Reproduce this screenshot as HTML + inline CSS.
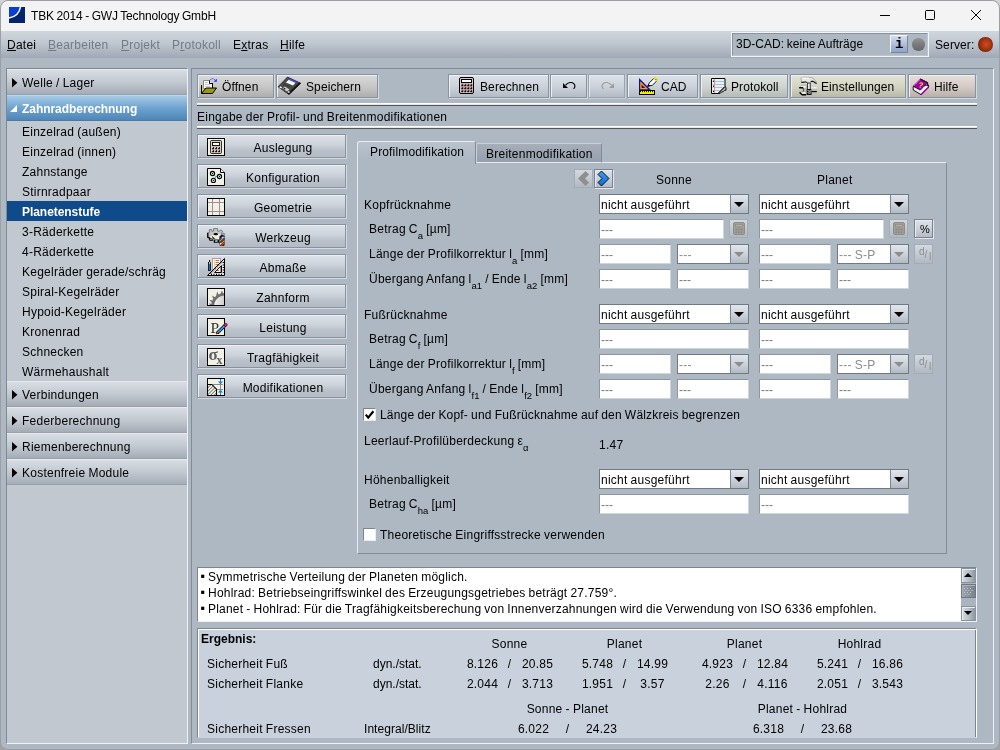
<!DOCTYPE html>
<html lang="de">
<head>
<meta charset="utf-8">
<title>TBK 2014 - GWJ Technology GmbH</title>
<style>
*{box-sizing:border-box;margin:0;padding:0}
html,body{width:1000px;height:750px;overflow:hidden;background:linear-gradient(#d2d2d2,#a2a2a2)}
body{font-family:"Liberation Sans",sans-serif;font-size:12px;color:#000;position:relative;letter-spacing:.24px;word-spacing:-.5px}
#win{position:absolute;left:0;top:0;width:1000px;height:750px;border-radius:8px;background:#adb8c3;overflow:hidden;border:1px solid #9b9fa5}
#w{position:absolute;left:-1px;top:-1px;width:1000px;height:750px;will-change:transform}
#w *{position:absolute;white-space:nowrap}
#w u,#w sub,#w .st{position:static}
#title{left:0;top:0;width:1000px;height:31px;background:#f3f3f3}
#title .t{left:31px;top:9px;font-size:12px;line-height:15px;color:#000;letter-spacing:-.17px}
#menubar{left:0;top:31px;width:1000px;height:27px;background:linear-gradient(#d0d6dd,#bfc7d0 45%,#9fa9b5)}
.mi{top:7px;line-height:15px}
.mi.dis{color:#727b86}
/* sidebar */
#side{left:6px;top:68px;width:182px;height:676px;background:#c1c8d0;border-right:1px solid #eef1f4;border-left:1px solid #7f8893;border-top:1px solid #7f8893;border-bottom:1px solid #f0f3f6}
.sh{left:0;width:180px;height:26px;background:linear-gradient(#d8dde3,#c3c9d1 50%,#a4acb6);border-top:1px solid #e6eaef;border-bottom:1px solid #98a0aa}
.sh span{left:15px;top:6px;line-height:15px}
.sh svg{left:5px;top:8px}
.sh.act{background:linear-gradient(#a6cbe6,#6ea3cf 50%,#4f86b8);border-top:1px solid #b6d6ee;border-bottom:1px solid #4a7aa8}
.sh.act span{color:#fff;font-weight:bold;letter-spacing:-.05px}
.si{left:15px;line-height:15px}
/* main */
#main{left:191px;top:68px;width:803px;height:676px;border:1px solid;border-color:#838c96 #eef1f4 #eef1f4 #838c96}
.tb{top:74px;height:24px;border:1px solid #8a939d;box-shadow:inset 1px 1px 0 #eceff3,1px 1px 0 #d3d9df;background:linear-gradient(#dde2e9,#cbd1d9 55%,#b3bbc5)}
.tb span{top:5px;line-height:15px;letter-spacing:.1px}
.tb.g{background:linear-gradient(#d9d9d9,#c6c6c6 55%,#adadad)}
.sep{left:197px;width:780px;height:3px;background:linear-gradient(#fff 0,#fff 1px,#e6e6e6 1px,#e6e6e6 2px,#555 2px)}
.nb{left:197px;width:149px;height:24px;border:1px solid #8a939d;box-shadow:inset 1px 1px 0 #eceff3,1px 1px 0 #d3d9df;background:linear-gradient(#dde2e9,#cdd3db 45%,#bac1ca 70%,#b3bbc5)}
.nb span{left:23px;width:124px;text-align:center;top:6px;line-height:15px}
.nb svg{left:9px;top:3px}
/* form */
.lbl{line-height:15px}
.lbl sub{font-size:9.5px;vertical-align:-6px;line-height:0;letter-spacing:0}
.tf{height:20px;background:#fff;border:1px solid;border-color:#8d96a0 #cfd5dc #cfd5dc #8d96a0}
.tf span{left:1px;top:3px;line-height:15px;color:#787878;letter-spacing:0}
.cb{height:20px;background:#fff;border:1px solid #6f7883}
.cb span{left:1px;top:3px;line-height:15px}
.cb b{right:0;top:0;width:18px;height:18px;border-left:1px solid #7d8690;background:linear-gradient(#e2e6eb,#cdd3da 50%,#b2bac4)}
.cb b:after{content:"";position:absolute;left:3px;top:7px;border-left:5px solid transparent;border-right:5px solid transparent;border-top:5px solid #000}
.cb.dis span{color:#8c8c8c}
.cb.dis b:after{border-top-color:#8e8e8e}
.chk{width:13px;height:13px;background:#fff;border:1px solid;border-color:#7d858f #e8ecf0 #e8ecf0 #7d858f}
.sb{border:1px solid #7a838d;box-shadow:inset 1px 1px 0 #e8ecf0,1px 1px 0 #e4e8ec;background:linear-gradient(#dde2e9,#cdd3db 50%,#b3bbc5)}
.sb.dis{border-color:#a3abb5;box-shadow:none;background:linear-gradient(#d3d9e0,#c3cad2 50%,#b0b8c2)}
.r{line-height:15px}
</style>
</head>
<body>
<div id="win"><div id="w">
<div id="title">
<svg style="left:9px;top:7px" width="16" height="16" viewBox="0 0 16 16"><rect width="16" height="16" fill="#04246b"/><path d="M0 0H11.5C10.5 6 6.5 10 0 11Z" fill="#0a3fd0"/><path d="M11.5 0C10.5 6 6.5 10 0 11" fill="none" stroke="#fff" stroke-width="1.5"/></svg>
<span class="t">TBK 2014 - GWJ Technology GmbH</span>
<svg style="left:875px;top:5px" width="20" height="20"><path d="M5 10.5H15" stroke="#000" stroke-width="1" fill="none"/></svg>
<svg style="left:920px;top:5px" width="20" height="20"><rect x="5.5" y="5.5" width="9" height="9" rx="1" stroke="#000" stroke-width="1" fill="none"/></svg>
<svg style="left:966px;top:5px" width="20" height="20"><path d="M5 5L15 15M15 5L5 15" stroke="#000" stroke-width="1" fill="none"/></svg>
</div>
<div id="menubar">
<span class="mi" style="left:7px"><u>D</u>atei</span>
<span class="mi dis" style="left:48px"><u>B</u>earbeiten</span>
<span class="mi dis" style="left:121px"><u>P</u>rojekt</span>
<span class="mi dis" style="left:172px">P<u>r</u>otokoll</span>
<span class="mi" style="left:233px">E<u>x</u>tras</span>
<span class="mi" style="left:280px"><u>H</u>ilfe</span>
</div>
<div style="left:731px;top:32px;width:198px;height:25px;border:1px solid #f2f4f6;background:#adb8c3"><div style="left:0;top:0;width:196px;height:23px;border:1px solid;border-color:#8a939d #bcc4cd #bcc4cd #8a939d"></div>
<span style="left:4px;top:4px;line-height:15px;letter-spacing:0">3D-CAD: keine Aufträge</span>
<div style="left:158px;top:2px;width:18px;height:18px;border:1px solid;border-color:#f4f6f9 #7d858f #7d858f #f4f6f9;background:linear-gradient(#d4def0,#a9b9d8 60%,#8fa3cb)"><span style="left:4px;top:1px;font:bold 14px/15px 'Liberation Mono',monospace;letter-spacing:0">i</span></div>
<div style="left:180px;top:5px;width:12.5px;height:12.5px;border-radius:50%;background:linear-gradient(#939393,#787878 55%,#666)"></div>
</div>
<span style="left:935px;top:38px;line-height:15px;letter-spacing:.1px">Server:</span>
<div style="left:978px;top:37px;width:14.5px;height:14.5px;border-radius:50%;background:radial-gradient(circle at 55% 48%,#d24a1a,#b03a14 35%,#8c2c0e 60%,#6a2008 72%)"></div>
<div id="side">
<div class="sh" style="top:0"><svg width="6" height="10"><path d="M0 0L5.4 4.75L0 9.5Z" fill="#000"/></svg><span>Welle / Lager</span></div>
<div class="sh act" style="top:26px"><svg style="left:3px;top:9px" width="7" height="7"><path d="M0 7H7V0Z" fill="#fff"/></svg><span>Zahnradberechnung</span></div>
<span class="si" style="top:56px">Einzelrad (außen)</span>
<span class="si" style="top:76px">Einzelrad (innen)</span>
<span class="si" style="top:96px">Zahnstange</span>
<span class="si" style="top:116px">Stirnradpaar</span>
<div style="left:0;top:132px;width:180px;height:20px;background:#0f4a8a"><span style="left:15px;top:4px;line-height:15px;color:#fff;font-weight:bold;letter-spacing:-.05px">Planetenstufe</span></div>
<span class="si" style="top:156px">3-Räderkette</span>
<span class="si" style="top:176px">4-Räderkette</span>
<span class="si" style="top:196px">Kegelräder gerade/schräg</span>
<span class="si" style="top:216px">Spiral-Kegelräder</span>
<span class="si" style="top:236px">Hypoid-Kegelräder</span>
<span class="si" style="top:256px">Kronenrad</span>
<span class="si" style="top:276px">Schnecken</span>
<span class="si" style="top:296px">Wärmehaushalt</span>
<div class="sh" style="top:312px"><svg width="6" height="10"><path d="M0 0L5.4 4.75L0 9.5Z" fill="#000"/></svg><span>Verbindungen</span></div>
<div class="sh" style="top:338px"><svg width="6" height="10"><path d="M0 0L5.4 4.75L0 9.5Z" fill="#000"/></svg><span>Federberechnung</span></div>
<div class="sh" style="top:364px"><svg width="6" height="10"><path d="M0 0L5.4 4.75L0 9.5Z" fill="#000"/></svg><span>Riemenberechnung</span></div>
<div class="sh" style="top:390px"><svg width="6" height="10"><path d="M0 0L5.4 4.75L0 9.5Z" fill="#000"/></svg><span>Kostenfreie Module</span></div>
</div>
<div id="main"></div>
<div class="tb g" style="left:197px;width:77px"><span style="left:24px">Öffnen</span></div>
<div class="tb g" style="left:276px;width:102px"><span style="left:29px">Speichern</span></div>
<div class="tb" style="left:448px;width:101px"><span style="left:31px">Berechnen</span></div>
<div class="tb" style="left:550px;width:37px"></div>
<div class="tb" style="left:588px;width:37px;border-color:#9aa3ad;box-shadow:inset 1px 1px 0 #e4e8ed,1px 1px 0 #c9d0d8"></div>
<div class="tb" style="left:627px;width:71px"><span style="left:33px">CAD</span></div>
<div class="tb" style="left:700px;width:88px;background:linear-gradient(#dfe4e0,#cdd3ce 55%,#b4bcb6)"><span style="left:30px">Protokoll</span></div>
<div class="tb" style="left:790px;width:116px;background:linear-gradient(#e4e4d6,#d3d3c3 55%,#b9b9a8)"><span style="left:30px">Einstellungen</span></div>
<div class="tb" style="left:908px;width:68px;background:linear-gradient(#e6dfda,#d4cac5 55%,#bab0ab)"><span style="left:25px">Hilfe</span></div>
<svg width="16" height="16" viewBox="0 0 16 16" style="left:201px;top:78px"><path d="M2.5 2.5H8.5L11.5 5.5V10.5H2.5Z" fill="#fff" stroke="#8a8a8a"/>
<path d="M8.5 2.5V5.5H11.5" fill="#fff" stroke="#000"/><path d="M11.5 5V10" stroke="#000"/>
<path d="M4 4.5H7M4 6.5H9M4 8.5H9" stroke="#c4c4c4"/>
<path d="M0.5 7V15" stroke="#000"/><path d="M1.5 7.5V14.5" stroke="#d8d040"/>
<path d="M5 10H15.5L11.5 15.5H0.5Z" fill="#9a9a12" stroke="#000"/>
<path d="M9.3 2Q11.5 -0.8 14 2" fill="none" stroke="#2828f0" stroke-width="1" stroke-dasharray="1.3 1"/>
<path d="M15.8 0.8V3.8H12.6Z" fill="#2020ff"/></svg><svg width="26" height="20" viewBox="0 0 26 20" style="left:277px;top:76px"><path d="M10.5 1L23.8 7.3L12 18.6L1 10.8Z" fill="#4a4a4a" stroke="#2a2a2a" stroke-width=".8"/>
<path d="M23.8 7.3L12 18.6L10.6 17.6L22.4 6.6Z" fill="#111"/>
<path d="M12 3.4L19 6.3L16 9.5L8.9 6.6Z" fill="#fff"/>
<path d="M12.2 2.6L19.6 6L18.6 7L11.3 3.7Z" fill="#4646ff"/>
<path d="M2.3 11.2L3.6 10.2L5.2 11.4L3.9 12.4Z" fill="#f2f2f2"/>
<path d="M5.4 12.6L8 10.6L12.4 13.4L10 15.6Z" fill="#cfcfcf"/>
<path d="M6.2 12.8L7.4 11.8L8.8 12.7L7.6 13.7Z" fill="#222"/>
<path d="M10.6 16L11.8 15L13 15.9L11.9 16.9Z" fill="#f2f2f2"/>
<path d="M7 7.6L13 10.4M6 8.6L12 11.4" stroke="#222" stroke-width=".7" stroke-dasharray="1 1"/></svg><svg width="15" height="17" viewBox="0 0 15 17" style="left:459px;top:77px"><rect x="0.5" y="0.5" width="14" height="16" rx="1.5" fill="#cfa9ad" stroke="#000"/><rect x="1.5" y="1.5" width="12" height="14" rx="1" fill="none" stroke="#e6cfd1" stroke-width=".8"/><rect x="2.5" y="2.5" width="10" height="3" fill="#fff" stroke="#000"/><rect x="2.2" y="7.2" width="2" height="2" fill="#000"/><rect x="2.2" y="7.2" width="1" height="1" fill="#e8d4d6"/><rect x="5.2" y="7.2" width="2" height="2" fill="#000"/><rect x="5.2" y="7.2" width="1" height="1" fill="#e8d4d6"/><rect x="8.2" y="7.2" width="2" height="2" fill="#000"/><rect x="8.2" y="7.2" width="1" height="1" fill="#e8d4d6"/><rect x="11.2" y="7.2" width="2" height="2" fill="#000"/><rect x="11.2" y="7.2" width="1" height="1" fill="#e8d4d6"/><rect x="2.2" y="10.2" width="2" height="2" fill="#000"/><rect x="2.2" y="10.2" width="1" height="1" fill="#e8d4d6"/><rect x="5.2" y="10.2" width="2" height="2" fill="#000"/><rect x="5.2" y="10.2" width="1" height="1" fill="#e8d4d6"/><rect x="8.2" y="10.2" width="2" height="2" fill="#000"/><rect x="8.2" y="10.2" width="1" height="1" fill="#e8d4d6"/><rect x="11.2" y="10.2" width="2" height="2" fill="#000"/><rect x="11.2" y="10.2" width="1" height="1" fill="#e8d4d6"/><rect x="2.2" y="13.2" width="2" height="2" fill="#000"/><rect x="2.2" y="13.2" width="1" height="1" fill="#e8d4d6"/><rect x="5.2" y="13.2" width="2" height="2" fill="#000"/><rect x="5.2" y="13.2" width="1" height="1" fill="#e8d4d6"/><rect x="8.2" y="13.2" width="2" height="2" fill="#000"/><rect x="8.2" y="13.2" width="1" height="1" fill="#e8d4d6"/><rect x="11.2" y="13.2" width="2" height="2" fill="#000"/><rect x="11.2" y="13.2" width="1" height="1" fill="#e8d4d6"/></svg><svg width="15" height="9" viewBox="0 0 15 9" style="left:562px;top:81px"><g><path d="M1 2V7H6Z" fill="#000"/><path d="M3.6 4.2C6 1 10 .8 12 2.8C13.6 4.6 13 6.6 11.6 7.8" fill="none" stroke="#000" stroke-width="1.15"/></g></svg><svg width="15" height="9" viewBox="0 0 15 9" style="left:600px;top:81px"><g transform="translate(15,0) scale(-1,1)"><path d="M1 2V7H6Z" fill="#9c9c9c"/><path d="M3.6 4.2C6 1 10 .8 12 2.8C13.6 4.6 13 6.6 11.6 7.8" fill="none" stroke="#9c9c9c" stroke-width="1.15"/></g></svg><svg width="20" height="19" viewBox="0 0 20 19" style="left:639px;top:76px"><path d="M0.5 3.5V14H11Z" fill="#ff9a10" stroke="#10108c" stroke-width="1.4"/>
<path d="M2.6 8.4V12H6.2Z" fill="#10108c"/>
<rect x="0.5" y="14.5" width="15" height="4" fill="#f4f000" stroke="#000"/>
<path d="M1 15.6H15" stroke="#000" stroke-dasharray="1 1"/>
<path d="M8.6 10.4L10.4 6.8L15.2 2L18 4.6L13.4 9.2Z" fill="#fff" stroke="#000" stroke-width=".9"/>
<path d="M8.4 10.6L9.6 8.2L11.6 10Z" fill="#000"/>
<path d="M14.6 2.6L16.2 1L19 3.6L17.4 5.2Z" fill="#f4f000" stroke="#d8d000" stroke-width=".5"/>
<path d="M16.4 4L17.4 3" stroke="#3030c0" stroke-width=".9"/></svg><svg width="16" height="16" viewBox="0 0 16 16" style="left:711px;top:78px"><path d="M0.5 0.5H14V8.4L7 15.5H0.5Z" fill="#f3eded" stroke="#000"/>
<path d="M4 3.5H13M4 6.5H13M4 9.5H11.5M4 12.5H8.5" stroke="#8cc8f2"/>
<path d="M1 3.5H3M1 6.5H3M1 9.5H3M1 12.5H3" stroke="#b8dcf4"/>
<path d="M3.5 1V15" stroke="#ff8484"/>
<rect x="2" y="2.6" width="1" height="1.2" fill="#000"/><rect x="2" y="7.6" width="1" height="1.2" fill="#000"/><rect x="2" y="12.8" width="1" height="1.2" fill="#000"/>
<path d="M14 8.6L15 9.4V12.2L13.4 12.4L12 13.8L10.4 14L9.2 15.4L7.2 15.5Z" fill="#b4b4b4" stroke="#000" stroke-width=".9"/></svg><svg width="20" height="20" viewBox="0 0 20 20" style="left:798px;top:76px"><path d="M3 1.6L6 1.2L12 1.4C15 1.8 17.4 3.4 18.6 7.4L17 6.4C16 4.8 14.4 4.6 12.8 5.2L12.6 7.4H9.4L9 6C7.6 5 5 6.4 3.4 6.2Z" fill="#e6e6e6" stroke="#8a8a8a" stroke-width=".6"/>
<path d="M3.4 6.4C5 6.6 7.6 5.4 9 6.4M12.8 5.6C14.6 5 16 5.4 17 6.8L18.6 7.6" fill="none" stroke="#111" stroke-width="1.1"/>
<path d="M3.6 2L11 2.2" stroke="#fff" stroke-width="1"/>
<rect x="9.6" y="7" width="2.6" height="6.4" fill="#f4f4f4" stroke="#222" stroke-width=".9"/>
<rect x="8.6" y="13" width="5" height="6" fill="#111"/>
<path d="M9.6 14.5H12.6M9.6 16.5H12.6" stroke="#d8d8d8" stroke-dasharray="1 1"/>
<path d="M10.6 15.5H13M10.6 17.5H13" stroke="#d8d8d8" stroke-dasharray="1 1"/>
<path d="M13.4 11.4H18.8V15.8H13.4Z" fill="#b8b8b8"/><path d="M13.4 11.9H18.8" stroke="#fff" stroke-width="1.2"/><path d="M13.4 15.6H18.8" stroke="#000" stroke-width="1.2"/>
<path d="M1.4 11.6L3.2 9.4L8 9L8.6 12.4L6.4 12.6L6.6 15.6L8.4 16.4L7.8 18.6H4.2L1.6 16.2L5.4 15.8L5.2 11.8Z" fill="#ededed" stroke="#7a7a7a" stroke-width=".5"/>
<path d="M1.2 11.8H5.2M1.6 16.4L4.2 18.8H8" fill="none" stroke="#000" stroke-width="1.4"/><path d="M5.4 12V15.6" stroke="#333" stroke-width=".8"/></svg><svg width="18" height="18" viewBox="0 0 18 18" style="left:912px;top:78px"><path d="M1.2 8.4V12L9 16.6L16.6 9V7Z" fill="#f0f0f0" stroke="#000" stroke-width=".9"/>
<path d="M9 16.8L16.8 9" stroke="#a000a0" stroke-width="1.3"/>
<path d="M8.4 1L15.6 4.6L8.2 12L1.2 8.2Z" fill="#a000a8" stroke="#6a006e" stroke-width=".6"/>
<path d="M8.4 1L15.6 4.6L15.8 8.2" fill="none" stroke="#000" stroke-width="1"/>
<path d="M1.6 8.4L8.2 12.2L15.4 5" fill="none" stroke="#000" stroke-width=".8" stroke-dasharray="1.2 .8"/>
<path d="M2.4 7.4L8 1.8" stroke="#d8b8dc" stroke-width=".9" stroke-dasharray="1 1"/>
<text x="6.6" y="9.6" font-family="Liberation Sans,sans-serif" font-weight="bold" font-size="7.5" fill="#f4f000" transform="rotate(14 9 7)">?</text></svg>
<div class="sep" style="top:103px"></div>
<span class="lbl" style="left:197px;top:110px">Eingabe der Profil- und Breitenmodifikationen</span>
<div class="sep" style="top:126px"></div>
<div class="nb" style="top:134px"><svg width="18" height="18" viewBox="0 0 18 18" style=""><rect x="0.5" y="0.5" width="17" height="17" fill="#f1f1e6" stroke="#000"/><rect x="3.5" y="2.5" width="11" height="13" rx="1.2" fill="#cdbfb2" stroke="#1a1410"/><rect x="4.3" y="3.3" width="9.4" height="11.4" rx=".8" fill="none" stroke="#e8e0d8" stroke-width=".7"/><rect x="5.5" y="4.5" width="7" height="3" fill="#fff" stroke="#1a1410"/><rect x="5" y="9.2" width="2" height="2" fill="#000"/><rect x="5" y="9.2" width="1" height="1" fill="#efe6dd"/><rect x="8" y="9.2" width="2" height="2" fill="#000"/><rect x="8" y="9.2" width="1" height="1" fill="#efe6dd"/><rect x="11" y="9.2" width="2" height="2" fill="#000"/><rect x="11" y="9.2" width="1" height="1" fill="#efe6dd"/><rect x="5" y="12.2" width="2" height="2" fill="#000"/><rect x="5" y="12.2" width="1" height="1" fill="#efe6dd"/><rect x="8" y="12.2" width="2" height="2" fill="#000"/><rect x="8" y="12.2" width="1" height="1" fill="#efe6dd"/><rect x="11" y="12.2" width="2" height="2" fill="#000"/><rect x="11" y="12.2" width="1" height="1" fill="#efe6dd"/></svg><span>Auslegung</span></div>
<div class="nb" style="top:164px"><svg width="18" height="18" viewBox="0 0 18 18" style=""><path d="M0.5 0.5H13.5L17.5 4.5V17.5H0.5Z" fill="#f1f1e6" stroke="#000"/><path d="M13.5 0.5V4.5H17.5" fill="#fafaf2" stroke="#000"/><path d="M6.5 6.5L8.5 8.4M12 8.4H9.4M7 11.4L8.4 9.2" stroke="#000" stroke-width=".8" stroke-dasharray="1 .8"/><rect x="8" y="7.9" width="1.2" height="1.2" fill="#58b8e0"/><circle cx="5.5" cy="5.5" r="2.1" fill="#a8e4f4" stroke="#000" stroke-width="1.1"/><rect x="5.0" y="5.0" width="1" height="1" fill="#000"/><circle cx="12.5" cy="8.5" r="2.1" fill="#a8e4f4" stroke="#000" stroke-width="1.1"/><rect x="12.0" y="8.0" width="1" height="1" fill="#000"/><circle cx="6.4" cy="12.4" r="2.1" fill="#a8e4f4" stroke="#000" stroke-width="1.1"/><rect x="5.9" y="11.9" width="1" height="1" fill="#000"/></svg><span>Konfiguration</span></div>
<div class="nb" style="top:194px"><svg width="18" height="18" viewBox="0 0 18 18" style=""><rect x="0.5" y="0.5" width="17" height="17" fill="#f1f1e6" stroke="#000"/><path d="M5.5 1V17M12.5 1V17M1 4.5H17M1 13.5H17" stroke="#a88c94"/></svg><span>Geometrie</span></div>
<div class="nb" style="top:224px"><svg width="18" height="18" viewBox="0 0 18 18" style=""><path d="M2.4 1.6H4.6L5 3.4L6.6 3V0.6H10.6V3L12.2 3.6L13.6 1.8L15.6 3.2L14.6 5.2L16 7V10L12.6 11.2V14.6H6.6V11.6L4.8 12.4L2.4 11V9.4L0.6 9V4.6L2.4 4.4Z" fill="#c4c4c4" stroke="#5a5a5a" stroke-width=".7"/>
<path d="M3.2 8.6L5.6 7L10.8 5.2L15.2 7.4V10.4L11.4 11.6L7.4 10.2L5 10.8Z" fill="#f0ece0"/>
<path d="M0.8 5V9.4L2.6 10.2V11.4L4.6 12.4" fill="none" stroke="#000" stroke-width="1.3"/>
<ellipse cx="8.8" cy="6.2" rx="2.3" ry="1.1" fill="#000"/>
<path d="M6.4 9.6L7.6 10.6M5.4 8.4L6.6 10.8" stroke="#000" stroke-width=".9"/>
<rect x="7" y="11.6" width="5" height="3" fill="#0a0a0a"/><rect x="8.2" y="12.2" width="2.4" height="1.6" fill="#a8d8e8"/>
<rect x="2.6" y="10.4" width="3" height="2.6" fill="#0a0a0a"/><rect x="3.4" y="11" width="1.2" height="1.2" fill="#d8d8e8"/>
<path d="M12.4 8.6L14.6 6.6L17.6 7.8V17.2L16.4 18H13.4L12.4 17Z" fill="#111"/>
<path d="M12.6 11.4L16.6 7.6M12.6 15.4L17.4 10.6" stroke="#1848c8" stroke-width="1.3"/>
<path d="M12.6 13.4L17.2 8.8M12.8 17.2L17.4 12.6" stroke="#ff9a10" stroke-width="1.2"/>
<path d="M14.4 17.6L17.4 14.6" stroke="#ff4a10" stroke-width="1.2"/>
<path d="M12.8 16.2L14.2 14.8M15 10.2L16.2 9" stroke="#fff" stroke-width="1"/>
<path d="M14.6 6.4L17 5L17.6 7.6" fill="#a8c4d0" stroke="#444" stroke-width=".5"/></svg><span>Werkzeug</span></div>
<div class="nb" style="top:254px"><svg width="18" height="18" viewBox="0 0 18 18" style=""><rect x="5.5" y="0.5" width="8" height="14" fill="#fff" stroke="#c09494"/>
<path d="M7.5 1.5V14" stroke="#ffd860"/><path d="M8.5 2.5H12M8.5 4.5H12M8.5 6.5H12M8.5 8.5H12M8.5 10.5H12M8.5 12.5H12" stroke="#b06040" stroke-width=".9"/>
<path fill-rule="evenodd" d="M17.5 0.5V17.5H0.5ZM14.5 7.6V14.5H7.6Z" fill="#e4e4dc" stroke="#000"/>
<path d="M3.4 16L16 3.4" stroke="#000" stroke-width="1" stroke-dasharray="1 1.3"/>
<path d="M16.4 4V16M4 16.4H16" stroke="#000" stroke-width="1.2" stroke-dasharray="1 1.5"/>
<rect x="1.5" y="4.5" width="2" height="8" fill="#1474d8" stroke="#000" stroke-width=".8"/><rect x="2" y="4" width="1.2" height="1.8" fill="#ffd040"/><rect x="2.1" y="2" width="1" height="2" fill="#000"/></svg><span>Abmaße</span></div>
<div class="nb" style="top:284px"><svg width="18" height="18" viewBox="0 0 18 18" style=""><rect x="0.5" y="0.5" width="17" height="17" fill="#f1f1e6" stroke="#000"/><defs><linearGradient id="zg" x1="0" y1="0" x2="1" y2="0"><stop offset="0" stop-color="#f4f4f4"/><stop offset="1" stop-color="#cfcfcf"/></linearGradient></defs>
<path d="M17 6.6C11 7.4 7.2 11.4 6.6 17H17Z" fill="url(#zg)"/>
<path d="M17 5L16 5.2L15 2.4L13.4 5.8L11.6 6.6L10.2 3.6L9.2 7.8L7.8 9.2L5 7.6L6.2 11L5.4 12.6L2.4 11.8L4.6 14.6L4.4 16L1.8 15.2L3 17H7.2C7.8 11.8 11.2 8.2 17 7.4Z" fill="#6e6e6e"/></svg><span>Zahnform</span></div>
<div class="nb" style="top:314px"><svg width="22" height="18" viewBox="0 0 22 18" style=""><rect x="0.5" y="0.5" width="17" height="17" fill="#f1f1e6" stroke="#000"/><text x="3.6" y="14.6" font-family="Liberation Serif,serif" font-size="15.5" fill="#333">P</text><path d="M9.4 14.2L17.4 6.2L19.2 8L11.2 16Z" fill="#2484e4" stroke="#000" stroke-width="1"/>
<path d="M11.4 13.4L12.6 14.6M13 11.8L14.2 13M14.6 10.2L15.8 11.4M16.2 8.6L17.4 9.8" stroke="#9cd0ff" stroke-width=".6"/>
<path d="M9.2 15L10.6 13.4L12 14.8L9.6 16Z" fill="#ff8a10" stroke="#000" stroke-width=".5"/><path d="M9 16.2L9.8 15.2L10.4 15.8Z" fill="#000"/>
<circle cx="18.6" cy="6.8" r="1.5" fill="#c020c0" stroke="#7a0a1a" stroke-width=".9"/></svg><span>Leistung</span></div>
<div class="nb" style="top:344px"><svg width="18" height="18" viewBox="0 0 18 18" style=""><rect x="0.5" y="0.5" width="17" height="17" fill="#f1f1e6" stroke="#000"/><text x="1.4" y="12.4" font-family="Liberation Serif,serif" font-weight="bold" font-size="17" fill="#5e5e68">σ</text><text x="9.6" y="15.6" font-family="Liberation Serif,serif" font-weight="bold" font-size="12" fill="#5e5e68">x</text></svg><span>Tragfähigkeit</span></div>
<div class="nb" style="top:374px"><svg width="18" height="18" viewBox="0 0 18 18" style=""><rect x="0.5" y="0.5" width="17" height="17" fill="#f1f1e6" stroke="#000"/><defs><pattern id="hp" width="2.4" height="2.4" patternUnits="userSpaceOnUse" patternTransform="rotate(-45)"><rect width="2.4" height="2.4" fill="#f1f1e6"/><rect width="2.4" height=".75" fill="#666"/></pattern></defs>
<path d="M0.5 6.5H4.6C6 6.8 6.2 8 7.6 9.4C8.4 10.2 9.5 10.6 9.5 11.6V17.5H0.5Z" fill="url(#hp)" stroke="#000" stroke-width="1.1"/>
<path d="M6 6.5H16M10 11.5H16M13.5 6.5V11.5" stroke="#8a8a8a"/>
<path d="M13.5 1V5.4M13.5 12.6V17" stroke="#1484e4"/>
<path d="M10.9 3.4H16.1L13.5 6.2Z" fill="#1484e4"/><path d="M10.9 14.6H16.1L13.5 11.8Z" fill="#1484e4"/></svg><span>Modifikationen</span></div>
<div id="tabpane" style="left:357px;top:162px;width:590px;height:392px;border:1px solid;border-color:#e8ecf0 #838b95 #838b95 #e8ecf0"></div>
<div style="left:476px;top:143px;width:126px;height:20px;background:linear-gradient(#a5aeb9,#96a0ac);border:1px solid;border-color:#c9d0d8 #838b95 #e8ecf0 #c9d0d8;border-radius:2px 2px 0 0"><span style="left:9px;top:3px;line-height:15px">Breitenmodifikation</span></div>
<div style="left:357px;top:141px;width:119px;height:23px;background:linear-gradient(#bac3cd,#adb8c3 75%);border:1px solid;border-color:#e8ecf0 #838b95 transparent #e8ecf0;border-bottom:none;border-radius:3px 3px 0 0"><span style="left:12px;top:3px;line-height:15px;letter-spacing:.15px">Profilmodifikation</span></div>
<div class="sb dis" style="left:574px;top:169px;width:19px;height:19px"><svg width="17" height="17" style="left:0;top:0"><path d="M3 8.5L10.5 1L14 4.5L10 8.5L14 12.5L10.5 16Z" fill="#8f8f8f"/></svg></div>
<div class="sb" style="left:594px;top:169px;width:19px;height:19px"><svg width="17" height="17" style="left:0;top:0"><defs><linearGradient id="bl" x1="0" y1="0" x2="0" y2="1"><stop offset="0" stop-color="#3c9cf4"/><stop offset="1" stop-color="#0c6cd8"/></linearGradient></defs><path d="M14 8.5L6.5 1L3 4.5L7 8.5L3 12.5L6.5 16Z" fill="url(#bl)" stroke="#000" stroke-width=".9"/></svg></div>
<span class="lbl" style="left:656px;top:173px">Sonne</span>
<span class="lbl" style="left:817px;top:173px">Planet</span>
<span class="lbl" style="left:364px;top:198px">Kopfrücknahme</span>
<div class="cb" style="left:599px;top:194px;width:150px"><span>nicht ausgeführt</span><b></b></div>
<div class="cb" style="left:759px;top:194px;width:150px"><span>nicht ausgeführt</span><b></b></div>
<span class="lbl" style="left:369px;top:222px">Betrag C<sub>a</sub> [µm]</span>
<div class="tf" style="left:599px;top:219px;width:125px"><span>---</span></div>
<div class="tf" style="left:759px;top:219px;width:125px"><span>---</span></div>
<span class="lbl" style="left:369px;top:247px">Länge der Profilkorrektur l<sub>a</sub> [mm]</span>
<div class="tf" style="left:599px;top:244px;width:72px"><span>---</span></div>
<div class="cb dis" style="left:677px;top:244px;width:72px"><span>---</span><b></b></div>
<div class="tf" style="left:759px;top:244px;width:72px"><span>---</span></div>
<div class="cb dis" style="left:837px;top:244px;width:72px"><span>--- S-P</span><b></b></div>
<span class="lbl" style="left:369px;top:272px">Übergang Anfang l<sub>a1</sub> / Ende l<sub>a2</sub> [mm]</span>
<div class="tf" style="left:599px;top:269px;width:72px"><span>---</span></div>
<div class="tf" style="left:677px;top:269px;width:72px"><span>---</span></div>
<div class="tf" style="left:759px;top:269px;width:72px"><span>---</span></div>
<div class="tf" style="left:837px;top:269px;width:72px"><span>---</span></div>
<span class="lbl" style="left:364px;top:308px">Fußrücknahme</span>
<div class="cb" style="left:599px;top:304px;width:150px"><span>nicht ausgeführt</span><b></b></div>
<div class="cb" style="left:759px;top:304px;width:150px"><span>nicht ausgeführt</span><b></b></div>
<span class="lbl" style="left:369px;top:332px">Betrag C<sub>f</sub> [µm]</span>
<div class="tf" style="left:599px;top:329px;width:150px"><span>---</span></div>
<div class="tf" style="left:759px;top:329px;width:150px"><span>---</span></div>
<span class="lbl" style="left:369px;top:357px">Länge der Profilkorrektur l<sub>f</sub> [mm]</span>
<div class="tf" style="left:599px;top:354px;width:72px"><span>---</span></div>
<div class="cb dis" style="left:677px;top:354px;width:72px"><span>---</span><b></b></div>
<div class="tf" style="left:759px;top:354px;width:72px"><span>---</span></div>
<div class="cb dis" style="left:837px;top:354px;width:72px"><span>--- S-P</span><b></b></div>
<span class="lbl" style="left:369px;top:382px">Übergang Anfang l<sub>f1</sub> / Ende l<sub>f2</sub> [mm]</span>
<div class="tf" style="left:599px;top:379px;width:72px"><span>---</span></div>
<div class="tf" style="left:677px;top:379px;width:72px"><span>---</span></div>
<div class="tf" style="left:759px;top:379px;width:72px"><span>---</span></div>
<div class="tf" style="left:837px;top:379px;width:72px"><span>---</span></div>
<div class="sb dis" style="left:729px;top:219px;width:19px;height:19px"><svg width="12" height="13" viewBox="0 0 12 13" style="left:3px;top:2px"><rect x="0.5" y="0.5" width="11" height="12" rx="1.6" fill="#a29e98" stroke="#8e8a84"/><rect x="2.5" y="2.5" width="7" height="2" fill="#b4b0aa" stroke="#8e8a84" stroke-width=".7"/><rect x="2.4" y="6.6" width="1.7" height="1.7" fill="#8a867f"/><rect x="5.1" y="6.6" width="1.7" height="1.7" fill="#8a867f"/><rect x="7.800000000000001" y="6.6" width="1.7" height="1.7" fill="#8a867f"/><rect x="2.4" y="9.399999999999999" width="1.7" height="1.7" fill="#8a867f"/><rect x="5.1" y="9.399999999999999" width="1.7" height="1.7" fill="#8a867f"/><rect x="7.800000000000001" y="9.399999999999999" width="1.7" height="1.7" fill="#8a867f"/></svg></div>
<div class="sb dis" style="left:889px;top:219px;width:19px;height:19px"><svg width="12" height="13" viewBox="0 0 12 13" style="left:3px;top:2px"><rect x="0.5" y="0.5" width="11" height="12" rx="1.6" fill="#a29e98" stroke="#8e8a84"/><rect x="2.5" y="2.5" width="7" height="2" fill="#b4b0aa" stroke="#8e8a84" stroke-width=".7"/><rect x="2.4" y="6.6" width="1.7" height="1.7" fill="#8a867f"/><rect x="5.1" y="6.6" width="1.7" height="1.7" fill="#8a867f"/><rect x="7.800000000000001" y="6.6" width="1.7" height="1.7" fill="#8a867f"/><rect x="2.4" y="9.399999999999999" width="1.7" height="1.7" fill="#8a867f"/><rect x="5.1" y="9.399999999999999" width="1.7" height="1.7" fill="#8a867f"/><rect x="7.800000000000001" y="9.399999999999999" width="1.7" height="1.7" fill="#8a867f"/></svg></div>
<div class="sb" style="left:914px;top:219px;width:19px;height:19px"><span style="left:5px;top:2px;line-height:15px;letter-spacing:0;font-size:11px">%</span></div>
<div class="sb dis" style="left:914px;top:244px;width:19px;height:20px"><span style="left:4px;top:2px;font-size:10px;line-height:10px;color:#8c8c8c;letter-spacing:0">d</span><span style="left:9.5px;top:5px;font-size:10px;line-height:10px;color:#8c8c8c;letter-spacing:0">/</span><span style="left:14px;top:7px;font-size:10px;line-height:10px;color:#8c8c8c;letter-spacing:0">l</span></div>
<div class="sb dis" style="left:914px;top:354px;width:19px;height:20px"><span style="left:4px;top:2px;font-size:10px;line-height:10px;color:#8c8c8c;letter-spacing:0">d</span><span style="left:9.5px;top:5px;font-size:10px;line-height:10px;color:#8c8c8c;letter-spacing:0">/</span><span style="left:14px;top:7px;font-size:10px;line-height:10px;color:#8c8c8c;letter-spacing:0">l</span></div>
<div class="chk" style="left:363px;top:408px"><svg width="11" height="11" style="left:0;top:0"><path d="M1.8 5.6L4.2 8.6L9.4 2.2" stroke="#000" stroke-width="2.2" fill="none"/></svg></div>
<span class="lbl" style="letter-spacing:.2px;left:380px;top:408px">Länge der Kopf- und Fußrücknahme auf den Wälzkreis begrenzen</span>
<span class="lbl" style="left:364px;top:434px">Leerlauf-Profilüberdeckung ε<sub>α</sub></span>
<span class="lbl" style="left:599px;top:438px">1.47</span>
<span class="lbl" style="left:364px;top:473px">Höhenballigkeit</span>
<div class="cb" style="left:599px;top:469px;width:150px"><span>nicht ausgeführt</span><b></b></div>
<div class="cb" style="left:759px;top:469px;width:150px"><span>nicht ausgeführt</span><b></b></div>
<span class="lbl" style="left:369px;top:497px">Betrag C<sub>ha</sub> [µm]</span>
<div class="tf" style="left:599px;top:494px;width:150px"><span>---</span></div>
<div class="tf" style="left:759px;top:494px;width:150px"><span>---</span></div>
<div class="chk" style="left:363px;top:528px"></div>
<span class="lbl" style="left:380px;top:528px">Theoretische Eingriffsstrecke verwenden</span>
<div style="left:197px;top:567px;width:780px;height:55px;background:#fff;border:1px solid;border-color:#7d858f #eef1f4 #eef1f4 #7d858f"><span style="left:2.4px;top:1px;line-height:15px;font-family:'DejaVu Sans',sans-serif;font-size:6.5px;letter-spacing:0">▪</span><span style="left:10px;top:2px;line-height:15px;letter-spacing:.21px">Symmetrische Verteilung der Planeten möglich.</span><span style="left:2.4px;top:17px;line-height:15px;font-family:'DejaVu Sans',sans-serif;font-size:6.5px;letter-spacing:0">▪</span><span style="left:10px;top:18px;line-height:15px;letter-spacing:.21px">Hohlrad: Betriebseingriffswinkel des Erzeugungsgetriebes beträgt 27.759°.</span><span style="left:2.4px;top:33px;line-height:15px;font-family:'DejaVu Sans',sans-serif;font-size:6.5px;letter-spacing:0">▪</span><span style="left:10px;top:34px;line-height:15px;letter-spacing:.21px">Planet - Hohlrad: Für die Tragfähigkeitsberechung von Innenverzahnungen wird die Verwendung von ISO 6336 empfohlen.</span><div style="left:763px;top:0;width:15px;height:53px;background:#aab3be"></div>
<div class="sb" style="left:763px;top:0;width:15px;height:15px;border-color:#8a939d;box-shadow:inset 1px 1px 0 #e8ecf0;background:linear-gradient(90deg,#d6dbe2,#b4bcc6 55%,#8f97a1)"><i style="left:2px;top:4px;border-left:4.5px solid transparent;border-right:4.5px solid transparent;border-bottom:4.5px solid #000"></i></div>
<div style="left:763px;top:16px;width:15px;height:14px;border:1px solid #6f7782;background:linear-gradient(90deg,#9aa2ac,#7a828c);box-shadow:inset 1px 1px 0 #aab2bc"><svg width="13" height="12" style="left:0;top:0"><g fill="#c4cad2"><rect x="2" y="3" width="1" height="1"/><rect x="5" y="3" width="1" height="1"/><rect x="8" y="3" width="1" height="1"/><rect x="3.5" y="5" width="1" height="1"/><rect x="6.5" y="5" width="1" height="1"/><rect x="9.5" y="5" width="1" height="1"/><rect x="2" y="7" width="1" height="1"/><rect x="5" y="7" width="1" height="1"/><rect x="8" y="7" width="1" height="1"/><rect x="3.5" y="9" width="1" height="1"/><rect x="6.5" y="9" width="1" height="1"/></g></svg></div>
<div class="sb" style="left:763px;top:38px;width:15px;height:15px;border-color:#8a939d;box-shadow:inset 1px 1px 0 #e8ecf0;background:linear-gradient(90deg,#d6dbe2,#b4bcc6 55%,#8f97a1)"><i style="left:2px;top:4px;border-left:4.5px solid transparent;border-right:4.5px solid transparent;border-top:4.5px solid #000"></i></div>
</div>
<div style="left:197px;top:628px;width:780px;height:110px;background:#c8d1dc;border:1px solid;border-color:#7d858f #fff #c8d1dc #7d858f;box-shadow:inset 1px 1px 0 #fff,inset -1px 0 0 #7d858f"><span class="r" style="top:3px;left:3px;font-weight:bold;letter-spacing:0;">Ergebnis:</span><span class="r" style="top:8px;left:261.5px;width:100px;text-align:center;">Sonne</span><span class="r" style="top:8px;left:376.5px;width:100px;text-align:center;">Planet</span><span class="r" style="top:8px;left:496.5px;width:100px;text-align:center;">Planet</span><span class="r" style="top:8px;left:611.5px;width:100px;text-align:center;">Hohlrad</span><span class="r" style="top:28px;left:9px;">Sicherheit Fuß</span><span class="r" style="letter-spacing:0;top:28px;left:175px;">dyn./stat.</span><span class="r" style="top:28px;left:234.5px;width:100px;text-align:center;">8.126</span><span class="r" style="top:28px;left:261.5px;width:100px;text-align:center;">/</span><span class="r" style="top:28px;left:289.5px;width:100px;text-align:center;">20.85</span><span class="r" style="top:28px;left:349.5px;width:100px;text-align:center;">5.748</span><span class="r" style="top:28px;left:376.5px;width:100px;text-align:center;">/</span><span class="r" style="top:28px;left:404.5px;width:100px;text-align:center;">14.99</span><span class="r" style="top:28px;left:469.5px;width:100px;text-align:center;">4.923</span><span class="r" style="top:28px;left:496.5px;width:100px;text-align:center;">/</span><span class="r" style="top:28px;left:524.5px;width:100px;text-align:center;">12.84</span><span class="r" style="top:28px;left:584.5px;width:100px;text-align:center;">5.241</span><span class="r" style="top:28px;left:611.5px;width:100px;text-align:center;">/</span><span class="r" style="top:28px;left:639.5px;width:100px;text-align:center;">16.86</span><span class="r" style="top:48px;left:9px;">Sicherheit Flanke</span><span class="r" style="letter-spacing:0;top:48px;left:175px;">dyn./stat.</span><span class="r" style="top:48px;left:234.5px;width:100px;text-align:center;">2.044</span><span class="r" style="top:48px;left:261.5px;width:100px;text-align:center;">/</span><span class="r" style="top:48px;left:289.5px;width:100px;text-align:center;">3.713</span><span class="r" style="top:48px;left:349.5px;width:100px;text-align:center;">1.951</span><span class="r" style="top:48px;left:376.5px;width:100px;text-align:center;">/</span><span class="r" style="top:48px;left:404.5px;width:100px;text-align:center;">3.57</span><span class="r" style="top:48px;left:469.5px;width:100px;text-align:center;">2.26</span><span class="r" style="top:48px;left:496.5px;width:100px;text-align:center;">/</span><span class="r" style="top:48px;left:524.5px;width:100px;text-align:center;">4.116</span><span class="r" style="top:48px;left:584.5px;width:100px;text-align:center;">2.051</span><span class="r" style="top:48px;left:611.5px;width:100px;text-align:center;">/</span><span class="r" style="top:48px;left:639.5px;width:100px;text-align:center;">3.543</span><span class="r" style="top:73px;left:319.5px;width:100px;text-align:center;">Sonne - Planet</span><span class="r" style="top:73px;left:554.5px;width:100px;text-align:center;">Planet - Hohlrad</span><span class="r" style="top:93px;left:9px;">Sicherheit Fressen</span><span class="r" style="letter-spacing:.05px;top:93px;left:166px;">Integral/Blitz</span><span class="r" style="top:93px;left:285.5px;width:100px;text-align:center;">6.022</span><span class="r" style="top:93px;left:319.5px;width:100px;text-align:center;">/</span><span class="r" style="top:93px;left:353.5px;width:100px;text-align:center;">24.23</span><span class="r" style="top:93px;left:520.5px;width:100px;text-align:center;">6.318</span><span class="r" style="top:93px;left:554.5px;width:100px;text-align:center;">/</span><span class="r" style="top:93px;left:588.5px;width:100px;text-align:center;">23.68</span></div>
</div></div>
</body>
</html>
